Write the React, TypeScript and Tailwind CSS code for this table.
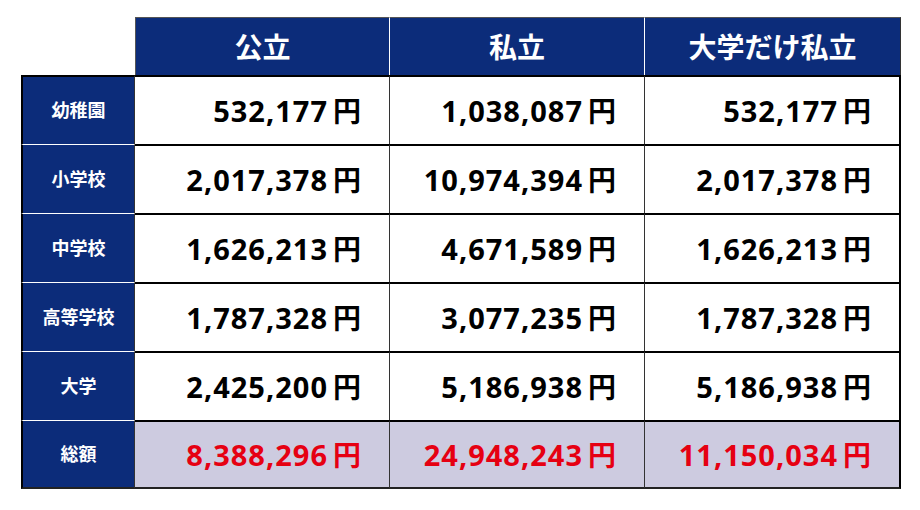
import React from "react";

const rows = [
  { label: "幼稚園", v: ["532,177", "1,038,087", "532,177"] },
  { label: "小学校", v: ["2,017,378", "10,974,394", "2,017,378"] },
  { label: "中学校", v: ["1,626,213", "4,671,589", "1,626,213"] },
  { label: "高等学校", v: ["1,787,328", "3,077,235", "1,787,328"] },
  { label: "大学", v: ["2,425,200", "5,186,938", "5,186,938"] },
];
const total = ["8,388,296", "24,948,243", "11,150,034"];

const font = { fontFamily: '"Noto Sans", "Noto Sans CJK JP", sans-serif' };

export default function App() {
  return (
    <div className="w-[920px] h-[510px] bg-white relative" style={font}>
      <div className="pt-[17px] pl-[21px]">
        <div className="grid grid-cols-[114px_255px_255px_256px] grid-rows-[58px_repeat(6,69px)]">
          <div />
          {["公立", "私立", "大学だけ私立"].map((h, i) => (
            <div
              key={h}
              className={`bg-[#0c2c7a] text-white font-bold text-[28px] flex items-center justify-center border-t border-t-[#555] ${
                i < 2 ? "border-r border-r-white" : "border-r border-r-[#333]"
              } ${i === 0 ? "border-l border-l-[#555]" : ""}`}
            >
              {h}
            </div>
          ))}
          {rows.map((r, ri) => (
            <React.Fragment key={r.label}>
              <div
                className={`bg-[#0c2c7a] text-white font-bold text-[18px] flex items-center justify-center border-l-2 border-l-black border-r border-r-[#333] ${
                  ri === 0 ? "border-t-2 border-t-black" : "border-t border-t-white"
                }`}
              >
                {r.label}
              </div>
              {r.v.map((v, ci) => (
                <div
                  key={ci}
                  className={`bg-white flex items-center justify-end pr-[28px] text-black font-bold text-[29px] border-t-2 border-t-black ${
                    ci < 2 ? "border-r border-r-[#333]" : "border-r-2 border-r-black"
                  }`}
                >
                  <span className="tracking-[1px]">{v}</span>
                  <span className="ml-[5px] text-[28px]">円</span>
                </div>
              ))}
            </React.Fragment>
          ))}
          <div className="bg-[#0c2c7a] text-white font-bold text-[18px] flex items-center justify-center border-l-2 border-l-black border-r border-r-[#333] border-t border-t-white border-b-2 border-b-[#222]">
            総額
          </div>
          {total.map((v, ci) => (
            <div
              key={ci}
              className={`bg-[#cdcbe0] flex items-center justify-end pr-[28px] text-[#e60012] font-bold text-[29px] border-t-2 border-t-black border-b-2 border-b-[#222] ${
                ci < 2 ? "border-r border-r-[#333]" : "border-r-2 border-r-black"
              }`}
            >
              <span className="tracking-[1px]">{v}</span>
              <span className="ml-[5px] text-[28px]">円</span>
            </div>
          ))}
        </div>
      </div>
    </div>
  );
}
